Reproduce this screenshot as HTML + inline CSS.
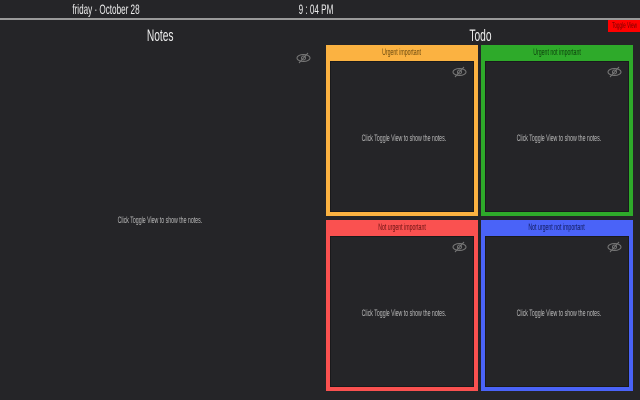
<!DOCTYPE html>
<html><head><meta charset="utf-8"><style>
*{margin:0;padding:0;box-sizing:border-box}
body{width:640px;height:400px;background:#252528;overflow:hidden;position:relative;font-family:"Liberation Sans",sans-serif;color:#ddd}
.abs{position:absolute}
.n{display:inline-block;transform:scaleX(.58);transform-origin:center}
.hdr{font-size:14px;color:#eee;top:1px;width:140px;text-align:center;white-space:nowrap}
.line{left:0;top:18px;width:640px;height:2px;background:#9a9a9a}
.toggle{left:608px;top:20px;width:32px;height:12px;background:#f00;color:#700;font-size:8px;line-height:12px;text-align:center;overflow:hidden;white-space:nowrap}
.title{font-size:17px;color:#eee;top:26px;width:100px;text-align:center}
.title .n{transform:scaleX(.6)}
.msg{font-size:9px;color:#bbb;white-space:nowrap;text-align:center}
.q{width:152px;height:171px;border:4px solid;border-top-width:16px}
.q .lab{position:absolute;top:-14px;left:0;right:0;text-align:center;font-size:9px;white-space:nowrap}
.q .in{position:absolute;inset:0;background:#252528;border:1px solid #1a1a1c}
.q .m{position:absolute;left:0;right:0;top:71px}
.q svg{position:absolute;right:6px;top:4px}
</style></head><body>
<div class="abs hdr" style="left:36px"><span class="n">friday · October 28</span></div>
<div class="abs hdr" style="left:246px"><span class="n">9 : 04 PM</span></div>
<div class="abs line"></div>
<div class="abs toggle"><span class="n" style="margin-left:-10px;margin-right:-10px">Toggle View</span></div>
<div class="abs title" style="left:110px"><span class="n">Notes</span></div>
<div class="abs title" style="left:430px"><span class="n">Todo</span></div>
<svg class="abs" style="left:296px;top:52px" width="15" height="12" viewBox="0 0 15 12"><ellipse cx="7.5" cy="6" rx="6.5" ry="3.5" fill="none" stroke="#777" stroke-width="1"/><circle cx="7.5" cy="6" r="2" fill="none" stroke="#777"/><line x1="3" y1="11" x2="12" y2="1" stroke="#777"/></svg>
<div class="abs msg" style="left:60px;top:215px;width:200px"><span class="n">Click Toggle View to show the notes.</span></div>

<div class="abs q" style="left:326px;top:45px;border-color:#fbb241"><div class="lab" style="color:#6a4a10"><span class="n">Urgent important</span></div><div class="in"><svg width="15" height="12" viewBox="0 0 15 12"><ellipse cx="7.5" cy="6" rx="6.5" ry="3.5" fill="none" stroke="#777"/><circle cx="7.5" cy="6" r="2" fill="none" stroke="#777"/><line x1="3" y1="11" x2="12" y2="1" stroke="#777"/></svg><div class="m msg"><span class="n">Click Toggle View to show the notes.</span></div></div></div>
<div class="abs q" style="left:481px;top:45px;border-color:#2eaa2a"><div class="lab" style="color:#0d3d0d"><span class="n">Urgent not important</span></div><div class="in"><svg width="15" height="12" viewBox="0 0 15 12"><ellipse cx="7.5" cy="6" rx="6.5" ry="3.5" fill="none" stroke="#777"/><circle cx="7.5" cy="6" r="2" fill="none" stroke="#777"/><line x1="3" y1="11" x2="12" y2="1" stroke="#777"/></svg><div class="m msg"><span class="n">Click Toggle View to show the notes.</span></div></div></div>
<div class="abs q" style="left:326px;top:220px;border-color:#fa5150"><div class="lab" style="color:#6a1212"><span class="n">Not urgent important</span></div><div class="in"><svg width="15" height="12" viewBox="0 0 15 12"><ellipse cx="7.5" cy="6" rx="6.5" ry="3.5" fill="none" stroke="#777"/><circle cx="7.5" cy="6" r="2" fill="none" stroke="#777"/><line x1="3" y1="11" x2="12" y2="1" stroke="#777"/></svg><div class="m msg"><span class="n">Click Toggle View to show the notes.</span></div></div></div>
<div class="abs q" style="left:481px;top:220px;border-color:#4a63f8"><div class="lab" style="color:#101a5a"><span class="n">Not urgent not important</span></div><div class="in"><svg width="15" height="12" viewBox="0 0 15 12"><ellipse cx="7.5" cy="6" rx="6.5" ry="3.5" fill="none" stroke="#777"/><circle cx="7.5" cy="6" r="2" fill="none" stroke="#777"/><line x1="3" y1="11" x2="12" y2="1" stroke="#777"/></svg><div class="m msg"><span class="n">Click Toggle View to show the notes.</span></div></div></div>
</body></html>
